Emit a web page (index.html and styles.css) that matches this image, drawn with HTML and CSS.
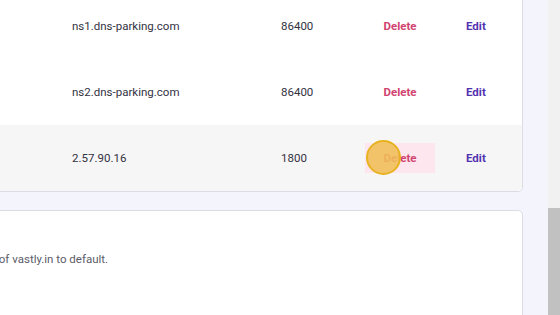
FILE: index.html
```html
<html>
    <head>
        <meta charset="utf-8">
        <link rel="stylesheet" href="styles.css">
    </head>
    <body>
        <div class="page">
            <main class="main">
                <section class="card records">
                    <div class="record">
                        <span class="cell type">NS</span>
                        <span class="cell value">ns1.dns-parking.com</span>
                        <span class="cell ttl">86400</span>
                        <button class="action delete">Delete</button>
                        <button class="action edit">Edit</button>
                    </div>
                    <div class="record">
                        <span class="cell type">NS</span>
                        <span class="cell value">ns2.dns-parking.com</span>
                        <span class="cell ttl">86400</span>
                        <button class="action delete">Delete</button>
                        <button class="action edit">Edit</button>
                    </div>
                    <div class="record hovered">
                        <span class="cell type">A</span>
                        <span class="cell value">2.57.90.16</span>
                        <span class="cell ttl">1800</span>
                        <button class="action delete active">
                            Delete
                            <span class="cursor"></span>
                        </button>
                        <button class="action edit">Edit</button>
                    </div>
                </section>

                <section class="card reset">
                    <p class="reset-text">Reset DNS records of vastly.in to default.</p>
                </section>
            </main>

            <div class="scrollbar"><div class="thumb"></div></div>
        </div>
    </body>
</html>
```

FILE: styles.css
```css
* { box-sizing: border-box; }

html, body {
    margin: 0;
    padding: 0;
    height: 100%;
    overflow: hidden;
}

body {
    background: #f4f4fc;
    font-family: Roboto, "Noto Sans", sans-serif;
    font-size: 11.5px;
    color: #33323f;
}

.page {
    display: flex;
    height: 315px;
}

.main {
    flex: 1;
    padding-right: 25px;
    overflow: hidden;
}

.card {
    background: #fff;
    border: 1px solid #dcdce4;
    border-radius: 5px;
    margin-left: -41px;
}

.records {
    margin-top: -8px;
    overflow: hidden;
}

.record {
    display: grid;
    grid-template-columns: 112px 209px 84px 70px 1fr;
    align-items: center;
    height: 66px;
}

.record.hovered { background: #f6f6f6; }

.cell.type { visibility: hidden; }

.action {
    font: inherit;
    font-weight: 700;
    border: none;
    background: none;
    height: 30px;
    padding: 0;
    cursor: pointer;
}

.delete {
    color: #d1436f;
    position: relative;
}

.delete.active { background: #fde6ee; }

.edit {
    color: #5233b0;
    justify-self: start;
    margin-left: 31px;
}

.cursor {
    position: absolute;
    left: 1px;
    top: -3px;
    width: 35px;
    height: 35px;
    border-radius: 50%;
    background: rgba(241, 190, 88, 0.88);
    border: 2px solid #e7b321;
}

.reset {
    margin-top: 18px;
    height: 200px;
    padding-top: 41px;
}

.reset-text {
    margin: 0 0 0 -60px;
    color: #5c5b6a;
    white-space: nowrap;
}

.scrollbar {
    width: 12px;
    background: #f1f1f1;
    display: flex;
    flex-direction: column;
    justify-content: flex-end;
}

.thumb {
    height: 107px;
    background: #c1c1c1;
}
```
